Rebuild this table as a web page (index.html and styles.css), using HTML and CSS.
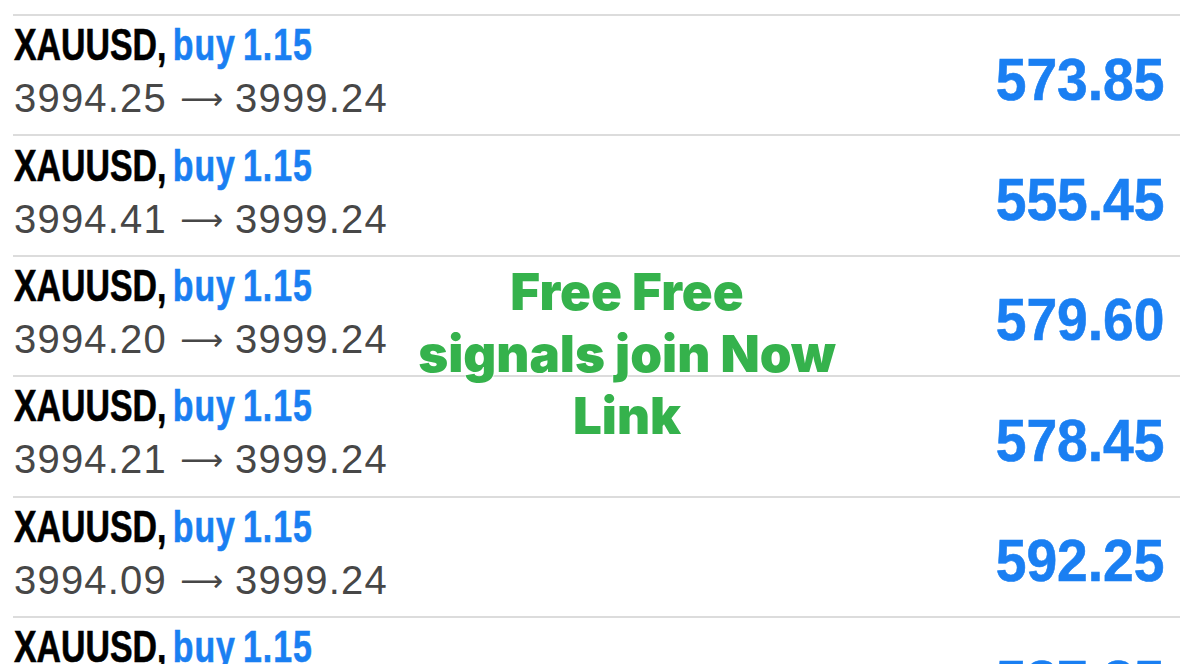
FILE: index.html
```html
<!DOCTYPE html>
<html>
<head>
<meta charset="utf-8">
<link rel="stylesheet" href="styles.css">
</head>
<body>
<div class="screen">
  <div class="top-gap"></div>
  <ul class="deals">
    <li class="deal">
      <div class="info">
        <div class="title"><span class="sym">XAUUSD,</span> <span class="side">buy 1.15</span></div>
        <div class="prices"><span>3994.25</span><span class="arrow">⟶</span><span>3999.24</span></div>
      </div>
      <div class="profit">573.85</div>
    </li>
    <li class="deal">
      <div class="info">
        <div class="title"><span class="sym">XAUUSD,</span> <span class="side">buy 1.15</span></div>
        <div class="prices"><span>3994.41</span><span class="arrow">⟶</span><span>3999.24</span></div>
      </div>
      <div class="profit">555.45</div>
    </li>
    <li class="deal">
      <div class="info">
        <div class="title"><span class="sym">XAUUSD,</span> <span class="side">buy 1.15</span></div>
        <div class="prices"><span>3994.20</span><span class="arrow">⟶</span><span>3999.24</span></div>
      </div>
      <div class="profit">579.60</div>
    </li>
    <li class="deal">
      <div class="info">
        <div class="title"><span class="sym">XAUUSD,</span> <span class="side">buy 1.15</span></div>
        <div class="prices"><span>3994.21</span><span class="arrow">⟶</span><span>3999.24</span></div>
      </div>
      <div class="profit">578.45</div>
    </li>
    <li class="deal">
      <div class="info">
        <div class="title"><span class="sym">XAUUSD,</span> <span class="side">buy 1.15</span></div>
        <div class="prices"><span>3994.09</span><span class="arrow">⟶</span><span>3999.24</span></div>
      </div>
      <div class="profit">592.25</div>
    </li>
    <li class="deal">
      <div class="info">
        <div class="title"><span class="sym">XAUUSD,</span> <span class="side">buy 1.15</span></div>
        <div class="prices"><span>3994.10</span><span class="arrow">⟶</span><span>3999.24</span></div>
      </div>
      <div class="profit">587.85</div>
    </li>
  </ul>
  <div class="promo">Free Free<br>signals join Now<br>Link</div>
</div>
</body>
</html>
```
FILE: styles.css
```css
html, body {
  margin: 0;
  padding: 0;
  background: #fff;
}
.screen {
  position: relative;
  width: 1180px;
  height: 664px;
  overflow: hidden;
  background: #fff;
}
.top-gap {
  height: 14px;
  margin-left: 13px;
  border-bottom: 2px solid #dcdcdc;
}
.deals {
  list-style: none;
  margin: 0;
  padding: 0;
}
.deal {
  height: 118.4px;
  margin-left: 13px;
  border-bottom: 2px solid #dcdcdc;
  display: flex;
  align-items: center;
  justify-content: space-between;
  padding-right: 15px;
}
.info {
  display: flex;
  flex-direction: column;
  align-items: flex-start;
  padding-left: 1px;
}
.title {
  display: inline-block;
  white-space: nowrap;
  font-family: "Liberation Sans", Arial, sans-serif;
  font-weight: 700;
  font-size: 44px;
  line-height: 50px;
  color: #000;
  word-spacing: -4px;
  -webkit-text-stroke: 0.6px currentColor;
  transform: scaleX(0.77);
  transform-origin: left center;
}
.side {
  color: #1a7ff2;
  letter-spacing: 1.2px;
}
.prices {
  white-space: nowrap;
  font-family: "Liberation Sans", Arial, sans-serif;
  font-size: 40px;
  line-height: 56px;
  color: #474747;
  letter-spacing: 1.2px;
}
.arrow {
  font-family: "DejaVu Sans", sans-serif;
  font-size: 30px;
  letter-spacing: 0;
  margin: 0 12px 0 13px;
  position: relative;
  top: -3px;
}
.profit {
  white-space: nowrap;
  font-family: "Liberation Sans", Arial, sans-serif;
  font-weight: 700;
  font-size: 60px;
  color: #1a7ff2;
  margin-top: 8px;
  -webkit-text-stroke: 0.6px currentColor;
  transform: scaleX(0.92);
  transform-origin: right center;
}
.promo {
  position: absolute;
  left: 330px;
  width: 594px;
  top: 261px;
  text-align: center;
  font-family: Inter, "Open Sans", sans-serif;
  font-weight: 900;
  font-size: 51px;
  line-height: 62px;
  color: #35b24c;
  text-shadow: 0 0 3px #fff, 0 0 2px #fff;
}
```
